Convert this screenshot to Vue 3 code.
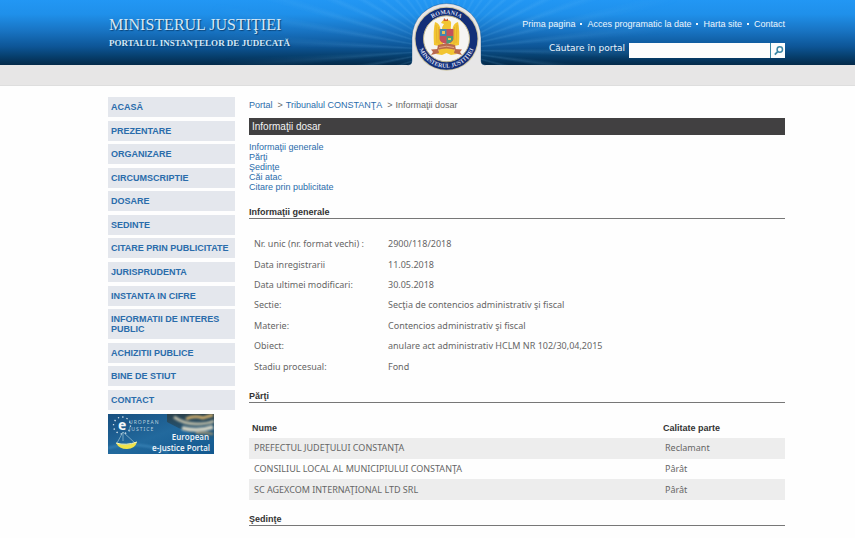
<script setup>
import { ref } from 'vue'

const query = ref('')
const topLinks = ['Prima pagina', 'Acces programatic la date', 'Harta site', 'Contact']
const menu = [
  'ACASĂ', 'PREZENTARE', 'ORGANIZARE', 'CIRCUMSCRIPTIE', 'DOSARE', 'SEDINTE',
  'CITARE PRIN PUBLICITATE', 'JURISPRUDENTA', 'INSTANTA IN CIFRE',
  'INFORMATII DE INTERES PUBLIC', 'ACHIZITII PUBLICE', 'BINE DE STIUT', 'CONTACT',
]
const sections = [
  ['generale', 'Informaţii generale'],
  ['parti', 'Părţi'],
  ['sedinte', 'Şedinţe'],
  ['cai', 'Căi atac'],
  ['citare', 'Citare prin publicitate'],
]
const details = [
  ['Nr. unic (nr. format vechi) :', '2900/118/2018'],
  ['Data inregistrarii', '11.05.2018'],
  ['Data ultimei modificari:', '30.05.2018'],
  ['Sectie:', 'Secţia de contencios administrativ şi fiscal'],
  ['Materie:', 'Contencios administrativ şi fiscal'],
  ['Obiect:', 'anulare act administrativ HCLM NR 102/30,04,2015'],
  ['Stadiu procesual:', 'Fond'],
]
const parties = [
  ['PREFECTUL JUDEŢULUI CONSTANŢA', 'Reclamant'],
  ['CONSILIUL LOCAL AL MUNICIPIULUI CONSTANŢA', 'Pârât'],
  ['SC AGEXCOM INTERNAŢIONAL LTD SRL', 'Pârât'],
]
</script>

<template>
  <div class="page">
    <header class="header">
      <div class="brand">
        <div class="ministry">MINISTERUL JUSTIŢIEI</div>
        <div class="portal">PORTALUL INSTANŢELOR DE JUDECATĂ</div>
      </div>
      <svg class="emblem" viewBox="0 0 81 74" aria-hidden="true">
        <path d="M2 74V65Q6 65 6 61V38A34.500 34.500 0 0 1 75 38V61Q75 65 79 65V74Z" fill="#e7e6e7" stroke="#0b3f73" stroke-opacity=".35" stroke-width="1" />
        <path d="M0 65.500H81V74H0Z" fill="#e7e6e6" />
        <circle cx="40.500" cy="38.800" r="32" fill="#cfc6a4" />
        <circle cx="40.500" cy="38.800" r="31" fill="#132f78" />
        <circle cx="40.500" cy="38.800" r="23" fill="#f6f5f3" stroke="#c3b88c" stroke-width="1" />
        <path id="arc-top" d="M15.700 38.800A24.800 24.800 0 0 1 65.300 38.800" fill="none" />
        <path id="arc-low" d="M11.500 38.800A29 29 0 0 0 69.500 38.800" fill="none" />
        <text class="ring"><textPath href="#arc-top" startOffset="50%" text-anchor="middle">ROMANIA</textPath></text>
        <text class="ring"><textPath href="#arc-low" startOffset="50%" text-anchor="middle">MINISTERUL JUSTIŢIEI</textPath></text>
        <g fill="#f2c532">
          <path d="M36 30Q36 26 38 24L35 23Q37 19 41 20Q46 20 45 25Q44 28 46 30Z" />
          <path d="M35 31Q34 23 29 22Q27 30 28 45L33 46L37 44V30Z" />
          <path d="M46 31Q47 23 52 22Q54 30 53 45L48 46L44 44V30Z" />
          <path d="M34 48L30 54L36 55L40.500 53L45 55L51 54L47 48Z" />
        </g>
        <path d="M37.500 21L38 18L40 20L42 18.500L42 21Z" fill="#cf5a2a" />
        <path d="M30 25L31 43M32.500 27L33 44M51 25L50 43M48.500 27L48 44" stroke="#dfa92c" stroke-width=".7" />
        <path d="M33.500 29H47.500V39Q47 43 40.500 44Q34 43 33.500 39Z" fill="#c4525c" />
        <path d="M34 29H40.500V36H34Z" fill="#4387ae" />
        <path d="M40.500 36H47V40Q45 43 40.500 44Z" fill="#4a9b7a" />
        <path d="M36 31H39V34H36ZM42 38H45V40H42Z" fill="#e8c05a" />
        <path d="M32 45Q40.500 42 49 45L50 50Q40.500 47 31 50Z" fill="#b9694c" />
        <path d="M32 49L25 49.500L27 52L25 55L33 53ZM49 49L56 49.500L54 52L56 55L48 53Z" fill="#b9694c" />
        <path d="M33 47.500Q40.500 45 48 47.500" fill="none" stroke="#e0a583" stroke-width="1" />
      </svg>
      <div class="tools">
        <nav class="top-links">
          <template v-for="(link, i) in topLinks" :key="link">
            <span v-if="i" class="dot"></span>
            <a href="#">{{ link }}</a>
          </template>
        </nav>
        <form class="search" @submit.prevent>
          <label for="q">Căutare în portal</label>
          <input id="q" v-model="query" type="text">
          <button type="submit" aria-label="Căutare">
            <svg viewBox="0 0 14 15" width="14" height="15">
              <circle cx="8.800" cy="6.500" r="2.700" fill="none" stroke="#3c87a6" stroke-width="1.500" />
              <path d="M6.700 8.700L3.800 11.600" stroke="#3c87a6" stroke-width="1.800" />
            </svg>
          </button>
        </form>
      </div>
    </header>
    <div class="strip"></div>

    <div class="body">
      <aside class="side">
        <nav class="menu">
          <a v-for="item in menu" :key="item" href="#">{{ item }}</a>
        </nav>
        <a class="banner" href="#">
          <svg viewBox="0 0 106 40" width="106" height="40">
            <defs>
              <linearGradient id="sea" x1="0" y1="0" x2="1" y2="1">
                <stop offset="0" stop-color="#174f80" />
                <stop offset=".5" stop-color="#22699d" />
                <stop offset="1" stop-color="#12588f" />
              </linearGradient>
              <linearGradient id="dusk" x1="0" y1="0" x2="0" y2="1">
                <stop offset="0" stop-color="#2b414b" />
                <stop offset="1" stop-color="#1d608f" />
              </linearGradient>
              <filter id="soft"><feGaussianBlur stdDeviation="1" /></filter>
            </defs>
            <path fill="url(#sea)" d="M0 0H106V40H0Z" />
            <path fill="url(#dusk)" d="M59 0H106V26Q84 22 59 8Z" />
            <g filter="url(#soft)" fill="none">
              <path d="M66 3Q76 10 88 10T106 7" stroke="#b9b9a6" stroke-width="3" />
              <path d="M78 5Q86 1 95 4L105 1" stroke="#c9a96b" stroke-width="3" />
              <path d="M74 14Q90 18 105 13" stroke="#cfd0c2" stroke-width="4" />
              <path d="M88 19Q96 18 105 20" stroke="#a59674" stroke-width="2" />
              <path d="M0 34Q28 26 60 38" stroke="#3984b7" stroke-width="2" />
            </g>
            <circle cx="14" cy="11.500" r="8.500" fill="none" stroke="#e5edf3" stroke-width="1.300" stroke-dasharray="1.300 3.150" />
            <text x="10" y="16" class="logo-e">e</text>
            <text x="21" y="10" class="logo-word">UROPEAN</text>
            <text x="21" y="17" class="logo-word">JUSTICE</text>
            <path d="M15 18L9 29M15 18L27 29M15 18V27" stroke="#8eb7cc" stroke-width=".8" />
            <path d="M8 29Q18 33 29 28Q27 35 19 35Q11 35 8 29Z" fill="#efe34b" />
            <path d="M8 29Q18 32 29 28" fill="none" stroke="#fff9b4" stroke-width="1" />
            <text x="101" y="26" text-anchor="end" class="banner-text">European</text>
            <text x="102" y="37" text-anchor="end" class="banner-text">e-Justice Portal</text>
          </svg>
        </a>
      </aside>

      <main class="main">
        <nav class="crumbs">
          <a href="#">Portal</a><span>&gt;</span><a href="#">Tribunalul CONSTANŢA</a><span>&gt;</span>Informaţii dosar
        </nav>
        <h1>Informaţii dosar</h1>
        <ul class="toc">
          <li v-for="[id, name] in sections" :key="id"><a :href="'#' + id">{{ name }}</a></li>
        </ul>

        <h2 id="generale">Informaţii generale</h2>
        <table class="details">
          <tbody>
            <tr v-for="[name, value] in details" :key="name">
              <th scope="row">{{ name }}</th>
              <td>{{ value }}</td>
            </tr>
          </tbody>
        </table>

        <h2 id="parti">Părţi</h2>
        <table class="parties">
          <thead>
            <tr><th scope="col">Nume</th><th scope="col">Calitate parte</th></tr>
          </thead>
          <tbody>
            <tr v-for="[name, role] in parties" :key="name">
              <td>{{ name }}</td>
              <td>{{ role }}</td>
            </tr>
          </tbody>
        </table>

        <h2 id="sedinte">Şedinţe</h2>
      </main>
    </div>
  </div>
</template>

<style>
body {
  background: #fefefe;
}
</style>

<style scoped>
.page {
  font: 9px/12px "Liberation Sans", Arial, sans-serif;
  color: #666;
}
a {
  color: #2a6cab;
  text-decoration: none;
}
.header {
  position: relative;
  display: grid;
  grid-template-columns: 1fr 81px 1fr;
  height: 65px;
  padding: 0 70px 0 108px;
  background: linear-gradient(#2297f4 0, #1f90ea 22%, #1873c2 48%, #0d5596 72%, #07406f 86%, #042a4a 100%);
}
.header::before {
  content: "";
  position: absolute;
  inset: 0;
  background: repeating-conic-gradient(from 2deg at calc(50% + 19px) 50px, transparent 0 3deg, rgba(130, 205, 255, .14) 5deg, transparent 7deg);
  mask-image: radial-gradient(circle at calc(50% + 19px) 50px, #000 80px, transparent 240px);
}
.brand,
.tools,
.emblem {
  position: relative;
}
.brand {
  padding: 15px 0 0 1px;
  font-family: "Liberation Serif", serif;
  color: #d4e8f6;
  text-shadow: 1px 1px 1px #0b4377;
  white-space: nowrap;
}
.ministry {
  font-size: 16px;
  line-height: 20px;
}
.portal {
  font-size: 9px;
  font-weight: bold;
  line-height: 16px;
}
.emblem {
  width: 81px;
  height: 74px;
}
.ring {
  font: bold 6px "Liberation Serif", serif;
  fill: #d8def0;
}
.tools {
  display: flex;
  flex-direction: column;
  align-items: flex-end;
  gap: 13px;
  padding-top: 18px;
}
.top-links {
  display: flex;
  align-items: center;
  gap: 5px;
  white-space: nowrap;
}
.top-links a {
  color: #eef6fd;
}
.dot {
  width: 2px;
  height: 2px;
  background: #eef6fd;
}
.search {
  display: flex;
  height: 15px;
}
.search label {
  margin-right: 4px;
  font: 9px/11px "DejaVu Sans", Verdana, sans-serif;
  color: #eef6fd;
}
.search input {
  box-sizing: border-box;
  width: 141px;
  padding: 0 2px;
  border: 0;
  background: #fdfdfd;
  font: inherit;
}
.search button {
  display: flex;
  width: 15px;
  padding: 0;
  border: 0;
  border-left: 1px solid #3c87a6;
  background: #fdfdfd;
}
.strip {
  height: 20px;
  border-bottom: 1px solid #dedede;
  background: #e7e6e6;
}
.body {
  display: grid;
  grid-template-columns: 127px 1fr;
  gap: 14px;
  padding: 11px 70px 12px 108px;
}
.menu {
  display: flex;
  flex-direction: column;
  justify-content: space-between;
  min-height: 313px;
}
.menu a {
  padding: 5px 3px;
  background: #e4e7ed;
  font-weight: bold;
  line-height: 10px;
}
.banner {
  display: block;
  margin-top: 4px;
}
.banner svg {
  display: block;
}
.logo-e {
  font: bold 14px "Noto Sans", sans-serif;
  fill: #f4f8fb;
}
.logo-word {
  font: 5px "Noto Sans", sans-serif;
  letter-spacing: 1px;
  fill: #b9d0df;
}
.banner-text {
  font: 600 8px "Open Sans", sans-serif;
  fill: #f3f7fa;
}
.main {
  padding-top: 2px;
}
.crumbs span {
  margin: 0 3px 0 5px;
}
h1 {
  margin: 7px 0;
  padding: 0 3px;
  background: #414041;
  color: #f4f4f4;
  font-size: 10px;
  font-weight: normal;
  line-height: 17px;
}
.toc {
  margin: 0;
  padding: 0 0 1px;
  list-style: none;
  line-height: 10px;
}
h2 {
  margin: 13px 0 15px;
  border-bottom: 1px solid #777;
  color: #333;
  font-size: 9px;
  line-height: 12px;
}
table {
  width: 100%;
  border-collapse: collapse;
}
.details th,
td {
  padding: 0 5px;
  font: 9px/20px "Noto Sans", Tahoma, sans-serif;
  text-align: left;
}
.details {
  height: 143px;
}
.details th {
  width: 124px;
}
.parties {
  height: 82px;
}
.parties th {
  padding: 0 3px;
  color: #333;
  line-height: 20px;
  text-align: left;
}
.parties th:last-child {
  width: 119px;
}
.parties tbody tr:nth-child(odd) {
  background: #ededed;
}
</style>
